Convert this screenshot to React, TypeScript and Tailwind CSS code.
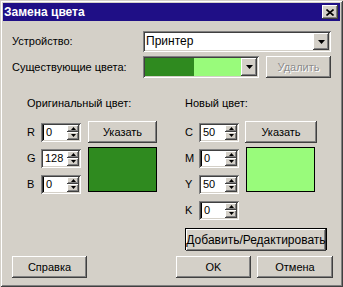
import React from "react";

const raised =
  "bg-[#d4d0c8] shadow-[inset_-1px_-1px_0_#404040,inset_1px_1px_0_#ffffff,inset_-2px_-2px_0_#808080,inset_2px_2px_0_#d4d0c8]";
const sunken =
  "shadow-[inset_1px_1px_0_#808080,inset_-1px_-1px_0_#ffffff,inset_2px_2px_0_#404040,inset_-2px_-2px_0_#d4d0c8]";

const Arrow = ({ up = false, small = false }: { up?: boolean; small?: boolean }) => {
  const w = small ? 5 : 7;
  const h = small ? 3 : 4;
  return (
    <svg width={w} height={h} viewBox={`0 0 ${w} ${h}`} className="block">
      <polygon
        points={up ? `0,${h} ${w},${h} ${w / 2},0` : `0,0 ${w},0 ${w / 2},${h}`}
        fill="#000"
      />
    </svg>
  );
};

const DropBtn = () => (
  <div className={`${raised} w-[16px] h-full flex items-center justify-center shrink-0`}>
    <Arrow />
  </div>
);

const Button = ({
  label,
  className = "",
  disabled = false,
}: {
  label: string;
  className?: string;
  disabled?: boolean;
}) => (
  <div
    className={`${raised} flex items-center justify-center h-[22px] ${
      disabled ? "text-[#8c8c8c] [text-shadow:1px_1px_0_#ffffff]" : "text-black"
    } ${className}`}
  >
    {label}
  </div>
);

const Spin = ({ value }: { value: string }) => (
  <div className={`${sunken} bg-white w-[40px] h-[19px] p-[2px] flex`}>
    <div
      className={`flex-1 pl-[2px] leading-[15px] ${value === "0" ? "border-l border-black" : ""}`}
    >
      {value}
    </div>
    <div className="w-[12px] flex flex-col">
      <div className={`${raised} flex-1 flex items-center justify-center`}>
        <Arrow up small />
      </div>
      <div className={`${raised} flex-1 flex items-center justify-center`}>
        <Arrow small />
      </div>
    </div>
  </div>
);

const Label = ({ t }: { t: string }) => <div className="leading-[19px]">{t}</div>;

export default function App() {
  return (
    <div
      className="w-[343px] h-[287px] p-[3px] bg-[#d4d0c8] text-[11px] text-black shadow-[inset_1px_1px_0_#d4d0c8,inset_-1px_-1px_0_#404040,inset_2px_2px_0_#ffffff,inset_-2px_-2px_0_#808080] overflow-hidden"
      style={{ fontFamily: '"Liberation Sans", Arial, sans-serif' }}
    >
      <div className="h-[18px] bg-[#1f0f86] flex items-center justify-between pl-[1px] pr-[2px]">
        <span className="text-white font-bold text-[12px]">Замена цвета</span>
        <div className={`${raised} w-[16px] h-[14px] flex items-center justify-center`}>
          <svg width="8" height="7" viewBox="0 0 8 7">
            <path d="M0.5 0.5 L7.5 6.5 M7.5 0.5 L0.5 6.5" stroke="#000" strokeWidth="1.6" />
          </svg>
        </div>
      </div>

      <div className="pl-[9px]">
        <div className="mt-[10px] flex items-center">
          <div className="w-[131px]">Устройство:</div>
          <div className={`${sunken} bg-white w-[188px] h-[21px] p-[2px] flex`}>
            <div className="flex-1 pl-[1px] leading-[17px] text-[12px]">Принтер</div>
            <DropBtn />
          </div>
        </div>

        <div className="mt-[4px] flex items-center">
          <div className="w-[131px]">Существующие цвета:</div>
          <div className={`${sunken} bg-white w-[116px] h-[22px] p-[2px] flex`}>
            <div className="w-[49px] bg-[#2f8a1f]" />
            <div className="flex-1 bg-[#99fb7b]" />
            <DropBtn />
          </div>
          <Button label="Удалить" disabled className="ml-[7px] w-[65px]" />
        </div>

        <div className="mt-[18px] flex">
          <div className="ml-[15px] w-[130px]">
            <div className="leading-[14px]">Оригинальный цвет:</div>
            <div className="mt-[9px] grid grid-cols-[14px_40px_76px] auto-rows-[26px] items-center">
              <Label t="R" />
              <Spin value="0" />
              <Button label="Указать" className="ml-[7px] w-[69px] h-[21px]" />
              <Label t="G" />
              <Spin value="128" />
              <div className="row-span-2 self-start mt-[2px] ml-[7px] w-[69px] h-[45px] border border-black bg-[#2f8a1f]" />
              <Label t="B" />
              <Spin value="0" />
            </div>
          </div>

          <div className="ml-[28px] w-[142px]">
            <div className="leading-[14px]">Новый цвет:</div>
            <div className="mt-[9px] grid grid-cols-[14px_40px_79px] auto-rows-[26px] items-center">
              <Label t="C" />
              <Spin value="50" />
              <Button label="Указать" className="ml-[6px] w-[72px] h-[21px]" />
              <Label t="M" />
              <Spin value="0" />
              <div className="row-span-2 self-start mt-[2px] ml-[7px] w-[69px] h-[45px] border border-black bg-[#99fb7b]" />
              <Label t="Y" />
              <Spin value="50" />
              <Label t="K" />
              <Spin value="0" />
            </div>
            <div className="mt-[5px] w-[142px] h-[22px] border border-black">
              <Button label="Добавить/Редактировать" className="w-full h-[20px] text-[12px]" />
            </div>
          </div>
        </div>

        <div className="mt-[6px] flex">
          <Button label="Справка" className="w-[75px]" />
          <Button label="OK" className="ml-[89px] w-[75px]" />
          <Button label="Отмена" className="ml-[6px] w-[76px]" />
        </div>
      </div>
    </div>
  );
}
